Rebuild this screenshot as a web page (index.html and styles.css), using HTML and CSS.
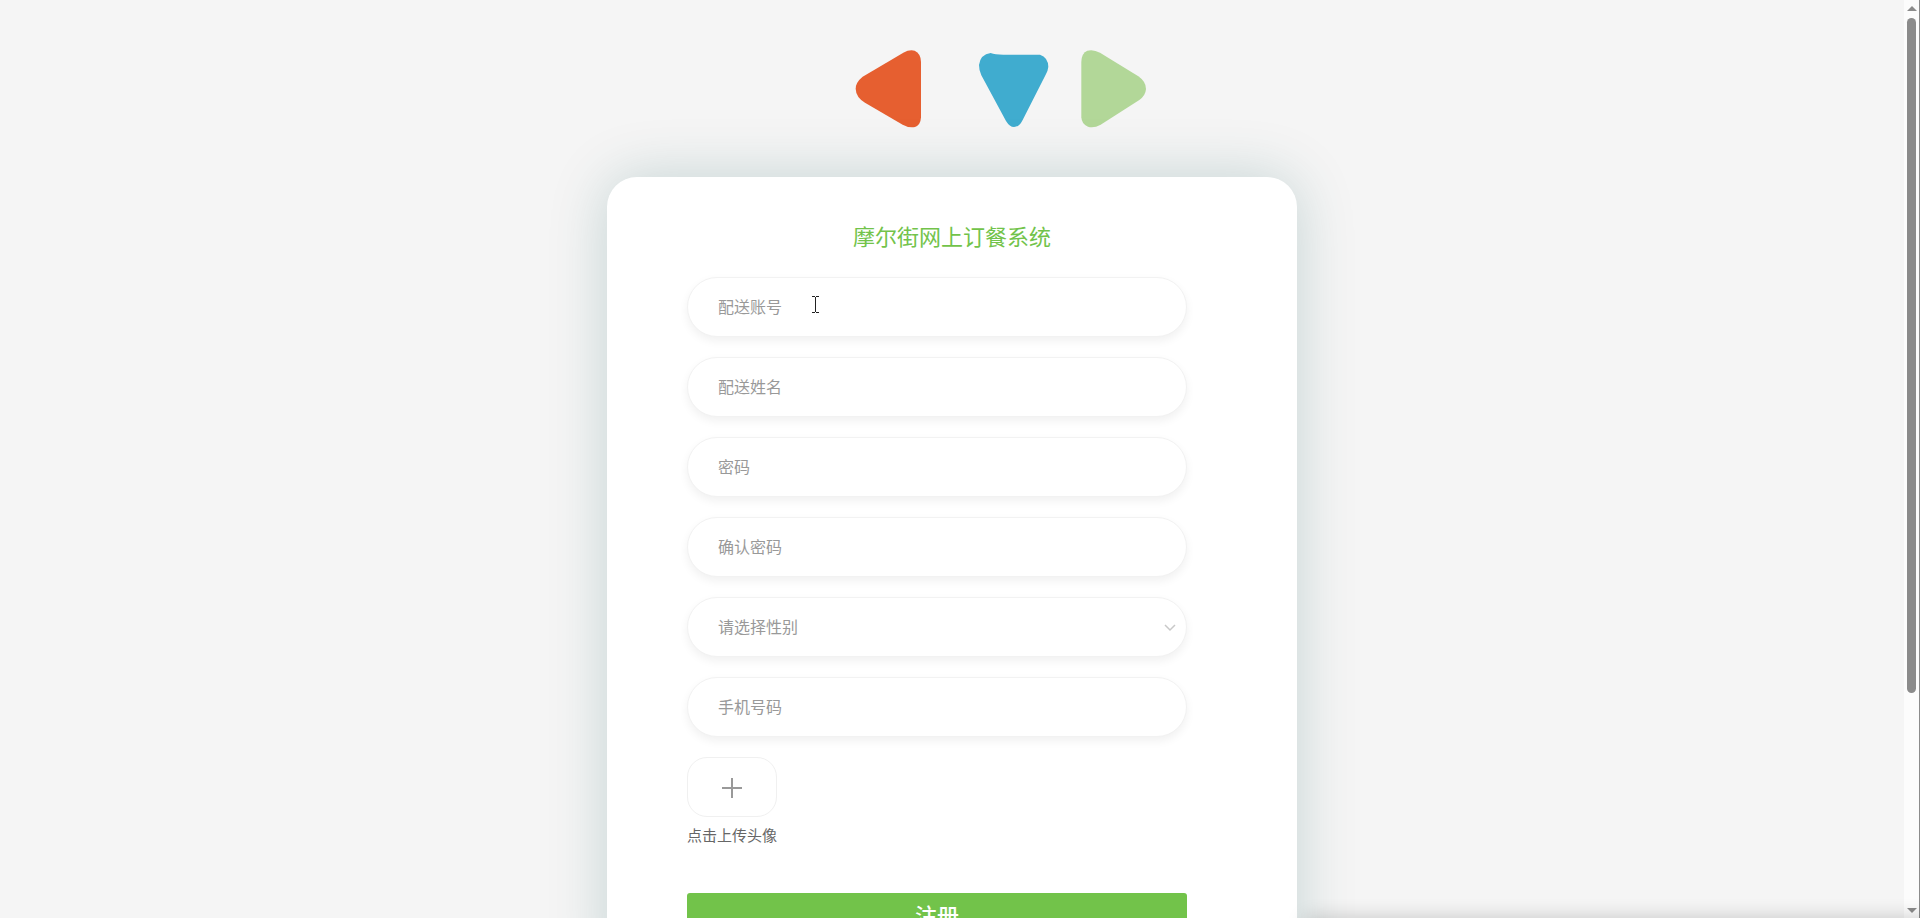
FILE: index.html
```html
<!DOCTYPE html>
<html lang="zh-CN">

<head>

    <meta charset="UTF-8">
    <meta name="viewport" content="width=device-width, initial-scale=1.0">
    <title>注册</title>

    <link rel="stylesheet" href="styles.css">

</head>

<body>

    <main class="page">

        <svg class="logo" viewBox="-84 0 1200 390" aria-hidden="true">
            <path fill="#e65f30" d="M370 98 Q388 88 404 92 Q422 100 423 125 V292 Q422 315 405 321 Q388 325 368 314 L255 248 Q228 232 227 206 Q227 187 248 170 Z" />
            <path fill="#40accf" d="M632 99 Q645 104 670 104 H780 Q804 112 805 140 Q804 152 797 164 L728 300 Q718 321 702 321 Q689 321 678 303 L604 166 Q597 152 597 135 Q601 103 632 99 Z" />
            <path fill="#b2d798" d="M904 125 Q905 99 922 92 Q940 87 960 98 L1075 169 Q1098 185 1098 207 Q1097 226 1078 240 L962 314 Q942 325 924 320 Q905 313 904 292 Z" />
        </svg>

        <div class="card">

            <h1>摩尔街网上订餐系统</h1>

            <form class="form" id="register-form">

                <div class="field">
                    <input type="text" id="account" placeholder="配送账号" aria-label="配送账号">
                    <svg class="pointer" viewBox="0 0 9 17" aria-hidden="true">
                        <path d="M1 .5h3M5 .5h3M4.500 1v15M1 16.500h3M5 16.500h3" />
                    </svg>
                </div>

                <div class="field">
                    <input type="text" id="name" placeholder="配送姓名" aria-label="配送姓名">
                </div>

                <div class="field">
                    <input type="password" id="password" placeholder="密码" aria-label="密码">
                </div>

                <div class="field">
                    <input type="password" id="password2" placeholder="确认密码" aria-label="确认密码">
                </div>

                <div class="field">
                    <select id="sex" aria-label="请选择性别">
                        <option value="">请选择性别</option>
                    </select>
                    <svg class="arrow" viewBox="0 0 12 8" aria-hidden="true">
                        <path d="M1 1l5 5 5-5" />
                    </svg>
                </div>

                <div class="field">
                    <input type="text" id="phone" placeholder="手机号码" aria-label="手机号码">
                </div>

                <div class="upload">
                    <button type="button" class="upload-btn" aria-labelledby="upload-tip">
                        <svg viewBox="0 0 20 20" aria-hidden="true">
                            <path d="M10 0v20M0 10h20" />
                        </svg>
                    </button>
                    <div class="upload-tip" id="upload-tip">点击上传头像</div>
                </div>

                <button type="submit" class="btn-register">注册</button>

            </form>

        </div>

    </main>

    <div class="scrollbar" aria-hidden="true">
        <span class="up"></span>
        <span class="track"><span class="thumb"></span></span>
        <span class="down"></span>
    </div>

    <div class="bottom-shadow"></div>

</body>

</html>
```

FILE: styles.css
```css
* {
    box-sizing: border-box;
}

body {
    margin: 0;
    height: 100vh;
    display: flex;
    overflow: hidden;
    background-color: #f5f5f5;
    font-family: "Noto Sans CJK SC", sans-serif;
}

.page {
    flex: 1;
    display: flex;
    flex-direction: column;
    align-items: center;
    padding: 20px 0 60px;
    overflow-y: auto;
    scrollbar-width: none;
}

.logo {
    flex: none;
    width: 400px;
    height: 130px;
    margin-bottom: 27px;
}

.card {
    flex: none;
    width: 690px;
    max-width: 100%;
    padding: 40px 80px;
    border-radius: 30px;
    background-color: #fff;
    box-shadow: 0 0 60px rgba(0, 80, 80, 0.2);
}

h1 {
    margin: 0 0 24px;
    color: #72c34a;
    font-size: 22px;
    font-weight: 400;
    line-height: 36px;
    text-align: center;
}

.form {
    display: flex;
    flex-direction: column;
    gap: 20px;
    max-width: 500px;
}

.field {
    position: relative;
}

.field input,
.field select {
    display: block;
    width: 100%;
    height: 60px;
    padding: 0 30px 2px;
    border: 1px solid #f2f2f2;
    border-radius: 30px;
    outline: none;
    appearance: none;
    background-color: #fff;
    box-shadow: 0 4px 10px rgba(0, 0, 0, 0.06);
    color: #999;
    font-family: inherit;
    font-size: 16px;
}

.field input::placeholder {
    color: #999;
    opacity: 1;
}

.arrow {
    position: absolute;
    top: 27px;
    right: 11px;
    width: 12px;
    height: 8px;
    fill: none;
    stroke: #c8c8c8;
    stroke-width: 1.5;
}

.pointer {
    position: absolute;
    top: 19px;
    left: 124px;
    width: 9px;
    height: 17px;
    fill: none;
    stroke: #222;
}

.upload {
    width: 90px;
}

.upload-btn {
    display: flex;
    align-items: center;
    justify-content: center;
    width: 100%;
    height: 60px;
    padding: 2px 0 0;
    border: 1px solid #f0f0f0;
    border-radius: 20px;
    background-color: #fff;
    cursor: pointer;
}

.upload-btn svg {
    width: 20px;
    height: 20px;
    stroke: #999;
    stroke-width: 2;
}

.upload-tip {
    margin-top: 8px;
    color: #666;
    font-size: 15px;
    line-height: 20px;
    white-space: nowrap;
}

.btn-register {
    height: 48px;
    margin-top: 28px;
    padding: 0 0 6px;
    border: none;
    border-radius: 3px;
    background-color: #72c34a;
    color: #fff;
    font-family: inherit;
    font-size: 22px;
    font-weight: 500;
    cursor: pointer;
}

.scrollbar {
    display: flex;
    flex-direction: column;
    align-items: center;
    width: 16px;
    padding: 6px 0 5px;
    border-right: 1px solid #8c8c8c;
    background-color: #fcfcfc;
}

.up,
.down {
    border: 5px solid transparent;
}

.up {
    border-top: none;
    border-bottom-color: #8b8b8b;
}

.down {
    border-bottom: none;
    border-top-color: #8b8b8b;
}

.track {
    flex: 1;
    width: 9px;
    padding: 7px 0;
}

.thumb {
    display: block;
    height: 76.4%;
    border-radius: 5px;
    background-color: #8b8b8b;
}

/* soft edge along the bottom right of the window */
.bottom-shadow {
    position: fixed;
    top: 100%;
    left: 68%;
    right: -20px;
    height: 20px;
    box-shadow: 0 0 20px rgba(0, 0, 0, 0.2);
}
```
